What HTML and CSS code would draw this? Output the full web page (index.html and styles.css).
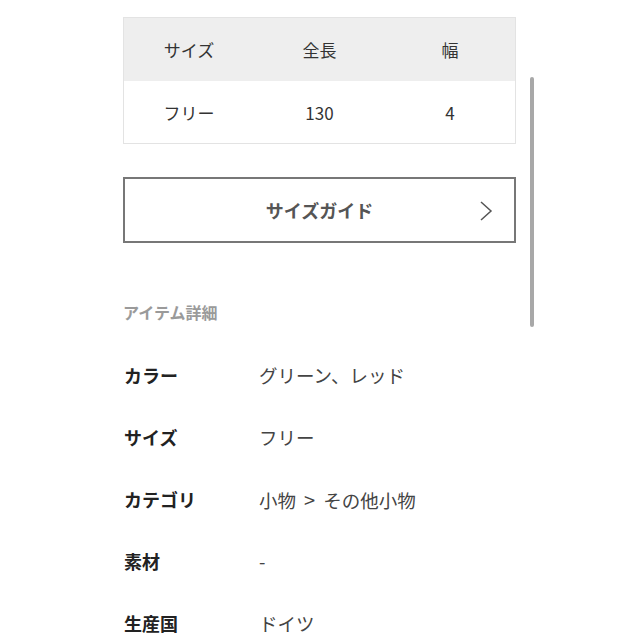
FILE: index.html
```html
<!DOCTYPE html>
<html lang="ja">
<head>
<meta charset="utf-8">
<link rel="stylesheet" href="styles.css">
</head>
<body>
<div class="page">
  <table class="size-table">
    <thead>
      <tr><th>サイズ</th><th>全長</th><th>幅</th></tr>
    </thead>
    <tbody>
      <tr><td>フリー</td><td>130</td><td>4</td></tr>
    </tbody>
  </table>

  <a class="guide-btn" href="#">
    <span class="guide-label">サイズガイド</span>
    <svg class="chevron" width="14" height="22" viewBox="0 0 14 22"><path d="M2 2 L12 11 L2 20" fill="none" stroke="#555" stroke-width="1.5"/></svg>
  </a>

  <h2 class="section-title">アイテム詳細</h2>

  <dl class="details">
    <div class="row"><dt>カラー</dt><dd>グリーン、レッド</dd></div>
    <div class="row"><dt>サイズ</dt><dd>フリー</dd></div>
    <div class="row"><dt>カテゴリ</dt><dd>小物<span class="sep">&gt;</span>その他小物</dd></div>
    <div class="row"><dt>素材</dt><dd>-</dd></div>
    <div class="row"><dt>生産国</dt><dd>ドイツ</dd></div>
  </dl>
</div>
<div class="scroll-indicator"></div>
</body>
</html>
```

FILE: styles.css
```css
html, body {
  margin: 0;
  padding: 0;
  background: #fff;
}
body {
  font-family: "Noto Sans CJK JP", "Noto Sans", sans-serif;
  color: #333;
  overflow: hidden;
  height: 640px;
}
.page {
  width: 393px;
  margin-left: 123px;
  padding-top: 17px;
}
.size-table {
  width: 100%;
  border-collapse: collapse;
  border: 1px solid #e3e3e3;
  table-layout: fixed;
}
.size-table th,
.size-table td {
  text-align: center;
  font-size: 17px;
  font-weight: 400;
  color: #333;
  padding: 0;
}
.size-table th {
  background: #eeeeee;
  height: 63px;
}
.size-table td {
  background: #fff;
  height: 62px;
}
.guide-btn {
  display: flex;
  align-items: center;
  justify-content: center;
  position: relative;
  margin-top: 33px;
  height: 62px;
  border: 2px solid #777;
  text-decoration: none;
  box-sizing: content-box;
  width: 389px;
}
.guide-label {
  font-size: 18px;
  font-weight: 700;
  color: #555;
}
.chevron {
  position: absolute;
  right: 21px;
  top: 21px;
}
.section-title {
  margin: 57px 0 0 0;
  font-size: 16px;
  font-weight: 700;
  color: #9a9a9a;
  line-height: 24px;
}
.details {
  margin: 20px 0 0 1px;
}
.row {
  display: flex;
  align-items: center;
  height: 62px;
}
.row dt {
  width: 135px;
  font-size: 18px;
  font-weight: 700;
  color: #222;
}
.row dd {
  margin: 0;
  font-size: 18.5px;
  color: #444;
}
.sep {
  display: inline-block;
  padding: 0 8px;
  font-size: 20px;
}
.scroll-indicator {
  position: absolute;
  left: 530px;
  top: 77px;
  width: 4px;
  height: 250px;
  border-radius: 2px;
  background: #a8a8a8;
}
```
